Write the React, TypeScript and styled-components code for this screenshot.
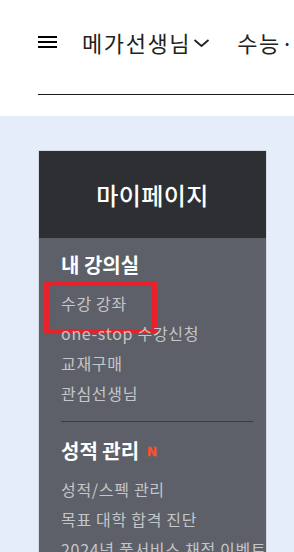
import React from "react";
import styled, { createGlobalStyle } from "styled-components";

const GlobalStyle = createGlobalStyle`
	html, body {
		margin: 0;
		padding: 0;
		background: #ffffff;
	}
	body {
		font-family: "Noto Sans CJK KR", "Noto Sans", sans-serif;
		overflow: hidden;
	}
	* {
		box-sizing: border-box;
	}
`;

type Group = {
	title: string;
	isNew?: boolean;
	items: { label: string; highlighted?: boolean }[];
};

const groups: Group[] = [
	{
		title: "내 강의실",
		items: [
			{ label: "수강 강좌", highlighted: true },
			{ label: "one-stop 수강신청" },
			{ label: "교재구매" },
			{ label: "관심선생님" },
		],
	},
	{
		title: "성적 관리",
		isNew: true,
		items: [
			{ label: "성적/스펙 관리" },
			{ label: "목표 대학 합격 진단" },
			{ label: "2024년 풀서비스 채점 이벤트" },
		],
	},
];

const App = () => {
	return (
		<Page>
			<GlobalStyle />
			<Header>
				<Nav>
					<Hamburger aria-label="menu">
						<span />
						<span />
						<span />
					</Hamburger>
					<NavItem>
						메가선생님
						<svg width="17" height="10" viewBox="0 0 17 10">
							<path d="M1.5 2 L8.5 8 L15.5 2" fill="none" stroke="#222" strokeWidth="1.8" />
						</svg>
					</NavItem>
					<NavItem>수능·내신</NavItem>
				</Nav>
				<NavLine />
			</Header>

			<Main>
				<Panel>
					<PanelHead>마이페이지</PanelHead>
					<PanelBody>
						{groups.map((group, i) => (
							<MenuGroup key={group.title} $first={i === 0}>
								<GroupTitle>
									{group.title}
									{group.isNew && <NewBadge>N</NewBadge>}
								</GroupTitle>
								<ItemList>
									{group.items.map((item) => (
										<Item key={item.label} $highlighted={item.highlighted}>
											{item.label}
										</Item>
									))}
								</ItemList>
							</MenuGroup>
						))}
					</PanelBody>
				</Panel>
			</Main>
		</Page>
	);
};

const Page = styled.div`
	width: 294px;
	height: 552px;
	overflow: hidden;
	background: #e5edfb;
`;

const Header = styled.header`
	height: 116px;
	background: #ffffff;
	padding-left: 38px;
	overflow: hidden;
`;

const Nav = styled.nav`
	height: 84px;
	display: flex;
	align-items: center;
	white-space: nowrap;
`;

const Hamburger = styled.div`
	width: 19px;
	height: 12px;
	display: flex;
	flex-direction: column;
	justify-content: space-between;
	margin-right: 25px;
	flex-shrink: 0;

	span {
		display: block;
		height: 2px;
		background: #000;
	}
`;

const NavItem = styled.div`
	display: flex;
	align-items: center;
	gap: 2px;
	font-size: 22px;
	color: #222;
	margin-right: 27px;
	flex-shrink: 0;
	letter-spacing: 1.6px;

	svg {
		margin-top: 2px;
	}
`;

const NavLine = styled.div`
	margin-top: 10px;
	height: 1px;
	background: #1a1a1a;
`;

const Main = styled.main`
	padding: 34px 0 0 38px;
`;

const Panel = styled.section`
	width: 229px;
	border: 1px solid #d4d8df;
	border-bottom: none;
	background: #5d6068;
`;

const PanelHead = styled.h1`
	margin: 0;
	height: 87px;
	background: #2e2f33;
	color: #ffffff;
	font-size: 24px;
	font-weight: 500;
	display: flex;
	align-items: center;
	justify-content: center;
	letter-spacing: 0.4px;
`;

const PanelBody = styled.div`
	padding: 0 13px 0 22px;
`;

const MenuGroup = styled.div<{ $first?: boolean }>`
	padding: ${({ $first }) => ($first ? "13px" : "15px")} 0 13px 0;
	border-top: ${({ $first }) => ($first ? "none" : "1px solid #3b3c40")};
`;

const GroupTitle = styled.h2`
	margin: 0;
	height: 26px;
	display: flex;
	align-items: center;
	color: #ffffff;
	font-size: 20px;
	font-weight: 700;
`;

const NewBadge = styled.span`
	margin-left: 8px;
	color: #ff5128;
	font-family: "Liberation Sans", Arial, sans-serif;
	font-size: 13px;
	font-weight: 900;
	margin-top: 3px;
	-webkit-text-stroke: 0.6px #ff5128;
`;

const ItemList = styled.ul`
	list-style: none;
	margin: 11px 0 0 0;
	padding: 0;
`;

const Item = styled.li<{ $highlighted?: boolean }>`
	position: relative;
	height: 30px;
	line-height: 30px;
	font-size: 16px;
	color: #c5c6c9;
	white-space: nowrap;
	letter-spacing: 0.7px;

	${({ $highlighted }) =>
		$highlighted &&
		`
		&::after {
			content: "";
			position: absolute;
			left: -17px;
			top: -7px;
			width: 103px;
			height: 43px;
			border: 5px solid #e8212a;
		}
	`}
`;

export default App;
